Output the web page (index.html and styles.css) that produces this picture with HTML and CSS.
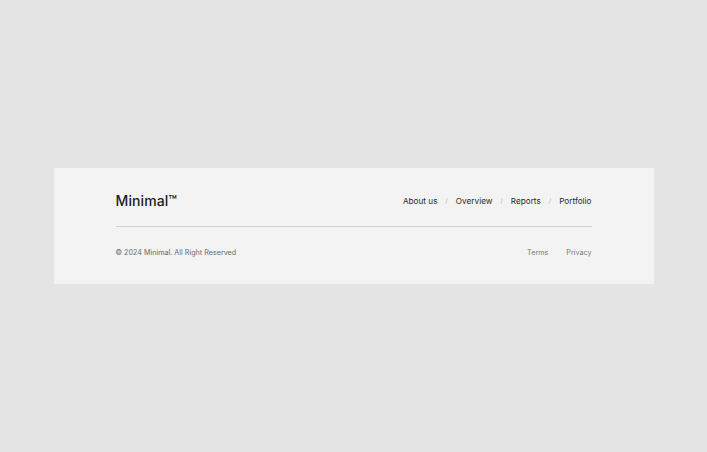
FILE: index.html
```html
<!DOCTYPE html>
<html lang="en">
<head>
  <meta charset="UTF-8">
  <meta name="viewport" content="width=device-width, initial-scale=1.0">
  <title>Minimal</title>
  <link rel="stylesheet" href="styles.css">
</head>
<body>
  <footer class="footer">
    <div class="footer-top">
      <div class="logo">Minimal™</div>
      <nav class="nav">
        <a href="#">About us</a>
        <span class="sep">/</span>
        <a href="#">Overview</a>
        <span class="sep">/</span>
        <a href="#">Reports</a>
        <span class="sep">/</span>
        <a href="#">Portfolio</a>
      </nav>
    </div>
    <div class="footer-bottom">
      <p class="copy">© 2024 Minimal. All Right Reserved</p>
      <div class="legal">
        <a href="#">Terms</a>
        <a href="#">Privacy</a>
      </div>
    </div>
  </footer>
</body>
</html>
```

FILE: styles.css
```css
body {
  margin: 0;
  min-height: 100vh;
  background: #e5e5e5;
  font-family: 'Inter', 'Liberation Sans', sans-serif;
  display: flex;
  align-items: center;
  justify-content: center;
}

.footer {
  width: 600px;
  box-sizing: border-box;
  background: #f3f3f3;
  padding: 22px 62px 25px;
}

.footer-top {
  height: 20px;
  display: flex;
  align-items: center;
  justify-content: space-between;
  padding-bottom: 16px;
  border-bottom: 1px solid #d2d2d2;
}

.logo {
  font-size: 14px;
  font-weight: 500;
  color: #1c1c1c;
  letter-spacing: 0.1px;
}

.nav {
  display: flex;
  align-items: center;
  gap: 8px;
  font-size: 8.2px;
  padding-top: 2px;
}

.nav a {
  color: #2a2a2a;
  text-decoration: none;
}

.sep {
  color: #b5b5b5;
  font-size: 6.5px;
}

.footer-bottom {
  height: 14px;
  margin-top: 18px;
  display: flex;
  align-items: center;
  justify-content: space-between;
  font-size: 7.2px;
  color: #6a6a6a;
}

.copy {
  margin: 0;
}

.legal {
  display: flex;
  gap: 18px;
}

.legal a {
  color: #7a7a7a;
  text-decoration: none;
}
```
